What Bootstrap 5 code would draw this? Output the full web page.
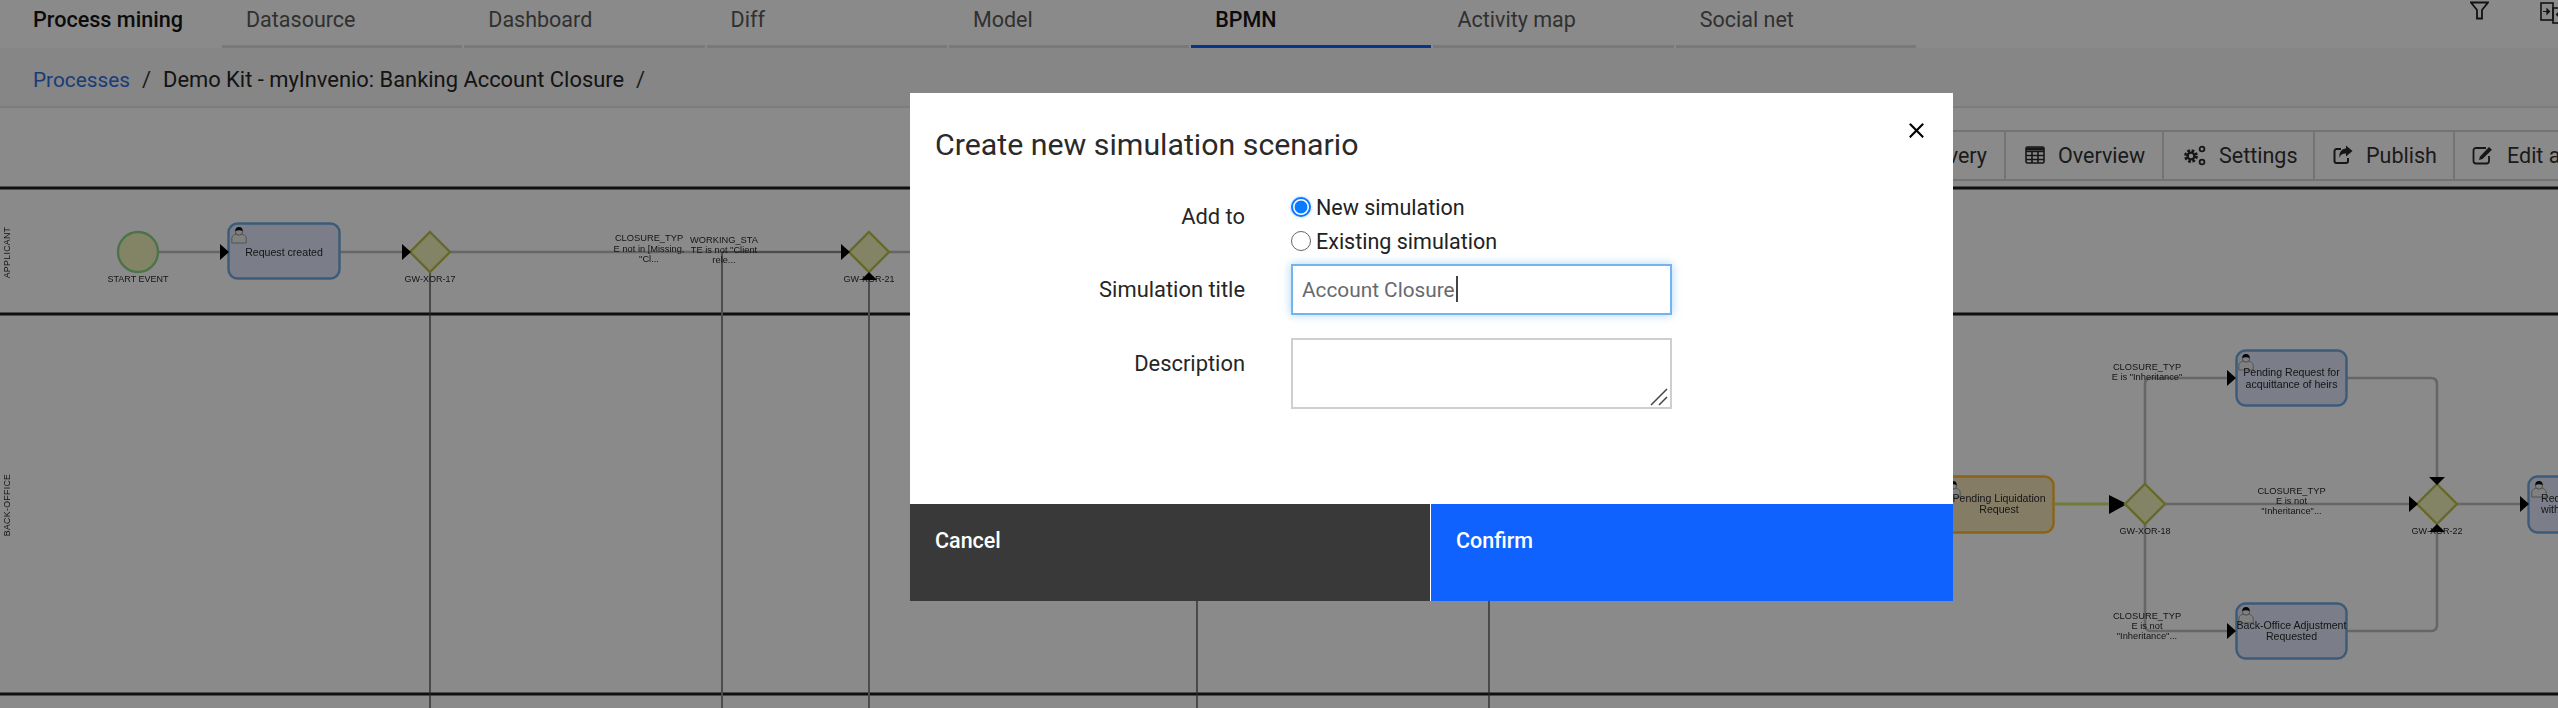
<!DOCTYPE html>
<html lang="en">
<head>
  <meta charset="UTF-8">
  <meta name="viewport" content="width=device-width, initial-scale=1.0">
  <title>Process mining - BPMN</title>
  <link href="https://cdn.jsdelivr.net/npm/bootstrap@5.3.2/dist/css/bootstrap.min.css" rel="stylesheet">
  <script src="https://cdn.jsdelivr.net/npm/bootstrap@5.3.2/dist/js/bootstrap.bundle.min.js" defer></script>
  <style>
    html, body { height: 100%; overflow: hidden; }
    body { font-family: Roboto, "Noto Sans", sans-serif; font-size: 21.5px; color: #161616; background: #fff; }

    /* top bar */
    .topbar { height: 48px; }
    .app-name { flex: 0 0 222px; padding: 7px 0 0 33px; line-height: 26px; font-weight: 500; font-size: 21.6px; white-space: nowrap; }
    .tab-item { flex: 0 0 240.3px; margin-right: 2px; height: 48px; padding: 7px 0 0 24px; line-height: 26px; color: #5a5a5a; border-bottom: 3px solid #e0e0e0; text-decoration: none; }
    .tab-item.active { color: #161616; font-weight: 500; border-bottom-color: #0f62fe; }
    .top-icons { margin-left: 552px; gap: 51px; padding-top: 1px; }

    /* breadcrumb band */
    .crumbs { height: 60px; background: #f8f8f8; border-bottom: 2px solid #e6e6e6; padding: 19px 0 0 33px; font-size: 21.9px; }
    .crumbs .breadcrumb { --bs-breadcrumb-margin-bottom: 0; --bs-breadcrumb-item-padding-x: 12px; --bs-breadcrumb-divider-color: #393939; --bs-breadcrumb-item-active-color: #262626; line-height: 26px; }
    .crumbs a { color: #2f6fe0; text-decoration: none; font-size: 20.8px; }

    /* toolbar over the diagram */
    .tools { margin: 22px 0 0 1840px; width: 718px; height: 51px; border-top: 2px solid #d6d6d6; border-bottom: 2px solid #d6d6d6; overflow: hidden; }
    .tool-btn { flex: 0 0 auto; height: 47px; display: flex; align-items: center; gap: 13px; padding: 2px 0 0 19px; color: #333; border-right: 2px solid #d6d6d6; white-space: nowrap; }
    .tool-btn svg { flex: 0 0 auto; margin-top: -3px; }
    .tb-disc { width: 166px; justify-content: flex-end; padding: 2px 17px 0 0; }
    .tb-over { width: 158px; }
    .tb-sett { width: 151px; }
    .tb-publ { width: 140px; padding-left: 18px; }
    .tb-edit { width: 120px; padding-left: 17px; border-right: 0; }

    /* diagram */
    .flow { display: block; margin-top: 5px; filter: blur(.7px); }
    .flow text { font-family: "Liberation Sans", Arial, sans-serif; fill: #2a2a2a; text-anchor: middle; }
    .t-note { font-size: 9.3px; }
    .t-gw { font-size: 9px; }
    .t-task { font-size: 10.6px; }
    .t-lane { font-size: 8.8px; letter-spacing: .3px; }
    .lane { stroke: #1c1c1c; stroke-width: 3; }
    .wire { stroke: #bcbcbc; stroke-width: 2.6; fill: none; }
    .wire-dark { stroke: #4a4a4a; stroke-width: 1.3; fill: none; }
    .wire-mid { stroke: #8c8c8c; stroke-width: 2; fill: none; }
    .gate { fill: #f3f4bd; stroke: #bcc24a; stroke-width: 2.4; }
    .task { fill: #e3e8fb; stroke: #6fa8e0; stroke-width: 2.4; }
    .task-warn { fill: #f6e6bd; stroke: #ffb72e; stroke-width: 2.4; }

    /* modal */
    .modal-backdrop { --bs-backdrop-opacity: .46; }
    .sim-dialog { margin: 93px 0 0 910px; width: 1043px; max-width: 1043px; }
    .sim-dialog .modal-content { height: 508px; border: 0; border-radius: 0; --bs-modal-border-radius: 0; }
    .sim-head { padding: 34px 28px 0 25px; border: 0; align-items: flex-start; border-radius: 0; }
    .sim-head .modal-title { font-size: 30.3px; font-weight: 400; line-height: 36px; color: #2a2a2a; }
    .modal-header .close-x { width: 17px; height: 17px; padding: 0; margin: -5px 0 0 auto; opacity: 1; background-size: 17px; }
    .sim-body { padding: 28px 0 0 0; }
    .sim-row { display: flex; gap: 46px; }
    .sim-label { flex: 0 0 335px; text-align: right; line-height: 30px; margin: 11px 0 0 0; font-size: 21.9px; color: #262626; }
    .sim-ctl { flex: 0 0 381px; position: relative; }
    .radio-line { display: flex; align-items: center; gap: 5px; height: 34px; min-height: 34px; padding: 0; margin: 0; color: #222; }
    .radio-line .form-check-input { float: none; width: 20px; height: 20px; margin: -3px 0 0 0; border: 1.5px solid #666; box-shadow: none; }
    .radio-line .form-check-input:checked { border: 2px solid #0a7aff; background: #fff radial-gradient(circle, #0a7aff 0 6px, transparent 6.8px); box-shadow: 0 0 3px rgba(10,122,255,.45); }
    .title-row { margin-top: 5px; }
    .title-input { height: 51px; padding: 0 9px; border: 2px solid #74b4ee; border-radius: 0; font-size: 20.8px; color: #666a70; box-shadow: 0 0 9px rgba(102,175,233,.55); }
    .fake-caret { position: absolute; left: 165px; top: 12px; width: 2px; height: 26px; background: #444; }
    .desc-row { margin-top: 23px; }
    .desc-input { height: 71px; min-height: 71px; border: 2px solid #cfcfcf; border-radius: 0; resize: none; }
    .desc-grip { position: absolute; right: 4px; bottom: 3px; display: block; }
    .sim-foot { padding: 0; border: 0; flex-wrap: nowrap; gap: 1px; border-radius: 0; background: #fff; }
    .sim-foot .btn { height: 97px; margin: 0; padding: 24px 25px 0; display: flex; align-items: flex-start; border: 0; border-radius: 0; font-size: 21.5px; font-weight: 500; line-height: 26px; }
    .sim-foot .btn-cancel { flex: 0 0 520px; background: #393939; color: #fff; }
    .sim-foot .btn-confirm { flex: 0 0 522px; background: #0f62fe; color: #fff; }
  </style>
</head>
<body>
  <header class="topbar d-flex">
    <div class="app-name">Process mining</div>
    <a class="tab-item" href="#">Datasource</a>
    <a class="tab-item" href="#">Dashboard</a>
    <a class="tab-item" href="#">Diff</a>
    <a class="tab-item" href="#">Model</a>
    <a class="tab-item active" href="#">BPMN</a>
    <a class="tab-item" href="#">Activity map</a>
    <a class="tab-item" href="#">Social net</a>
    <div class="top-icons d-flex">
      <svg width="19" height="19" viewBox="0 0 19 19" fill="none" stroke="#222" stroke-width="1.8"><path d="M1 1.5h17l-6 7.5v8.5H7V9z"/></svg>
      <svg width="26" height="24" viewBox="0 0 26 24" fill="none" stroke="#222" stroke-width="1.6"><rect x="1" y="2" width="12" height="17"/><rect x="13" y="7" width="12" height="15"/><path d="M3 10.5h5M9.5 10.5l-2.5-2.500v5zM23 13.500h-5M16.500 13.500l2.500-2.500v5z" fill="#222" stroke-width="1.2"/></svg>
    </div>
  </header>

  <div class="crumbs">
    <ol class="breadcrumb">
      <li class="breadcrumb-item"><a href="#">Processes</a></li>
      <li class="breadcrumb-item active">Demo Kit - myInvenio: Banking Account Closure</li>
      <li class="breadcrumb-item active"></li>
    </ol>
  </div>

  <div class="tools d-flex">
    <div class="tool-btn tb-disc">Discovery</div>
    <div class="tool-btn tb-over">
      <svg width="20" height="18" viewBox="0 0 20 18" fill="none" stroke="#2a2a2a" stroke-width="1.6"><rect x="1" y="1" width="18" height="16" rx="1.500"/><path d="M1 5.500h18M1 9.500h18M1 13.500h18M7 5v12M13 5v12"/><path d="M1 3h18" stroke-width="3"/></svg>
      Overview
    </div>
    <div class="tool-btn tb-sett">
      <svg width="23" height="21" viewBox="0 0 23 21" fill="none" stroke="#2a2a2a"><circle cx="8" cy="11" r="5.400" stroke-width="3" stroke-dasharray="2.600 1.640"/><circle cx="8" cy="11" r="3.400" stroke-width="2.400"/><circle cx="19" cy="4" r="2.400" stroke-width="1.800"/><circle cx="19" cy="17" r="2.400" stroke-width="1.800"/></svg>
      Settings
    </div>
    <div class="tool-btn tb-publ">
      <svg width="20" height="20" viewBox="0 0 20 20" fill="none" stroke="#2a2a2a" stroke-width="2"><path d="M8 4H3.500A2 2 0 0 0 1.500 6v10a2 2 0 0 0 2 2h9.500a2 2 0 0 0 2-2v-3"/><path d="M13 0.500l6.500 5.500-6.500 5.500V8.500C9 8.500 7 10 6.500 13 5.800 7.500 8.500 4 13 3.600z" fill="#2a2a2a" stroke="none"/></svg>
      Publish
    </div>
    <div class="tool-btn tb-edit">
      <svg width="22" height="20" viewBox="0 0 22 20" fill="none" stroke="#2a2a2a" stroke-width="1.800"><path d="M14 3H4a2.500 2.500 0 0 0-2.500 2.500v10.500A2.500 2.500 0 0 0 4 18.500h10.500a2.500 2.500 0 0 0 2.500-2.500V11"/><path d="M8 11.500L17 2l3 2.800-9.500 9.200-3.500 1z" fill="#2a2a2a" stroke="none"/></svg>
      Edit access
    </div>
  </div>

  <!-- the process diagram: free canvas, coordinates are page pixels -->
  <svg class="flow" width="2558" height="522" viewBox="0 186 2558 522" xmlns="http://www.w3.org/2000/svg">
    <defs>
      <g id="usr">
        <path d="M.8 17v-5c0-2.300 3-3.300 4.200-4h6c1.200.7 4.200 1.700 4.200 4v5z" fill="#ececec" stroke="#9a9a9a"/>
        <circle cx="8" cy="5.500" r="3.700" fill="#ececec" stroke="#8a8a8a"/>
        <path d="M4.300 5.200a3.700 4.300 0 0 1 7.400 0c-2.200-1.200-5.200-1.200-7.400 0z" fill="#0c0c0c"/>
      </g>
    </defs>

    <line class="lane" x1="0" y1="188" x2="2558" y2="188"/>
    <line class="lane" x1="0" y1="314" x2="2558" y2="314"/>
    <line class="lane" x1="0" y1="694" x2="2558" y2="694"/>
    <text class="t-lane" transform="translate(10 252.500) rotate(-90)">APPLICANT</text>
    <text class="t-lane" transform="translate(10 505) rotate(-90)">BACK-OFFICE</text>

    <!-- applicant lane wires -->
    <path class="wire" d="M158 252H222M340 252H404M450 252H843M889 252H910"/>
    <path class="wire-mid" d="M722 252V708M869 278V708"/>
    <path class="wire-mid" d="M722 252H843"/>
    <path class="wire-dark" d="M430 272V708M1197 314V708M1489 314V708"/>

    <circle cx="138" cy="252" r="20" fill="#f3f4bd" stroke="#8fd48d" stroke-width="2.400"/>
    <text class="t-gw" x="138" y="282">START EVENT</text>
    <rect class="task" x="228.500" y="223.500" width="111" height="55" rx="9"/>
    <use href="#usr" x="231" y="226"/>
    <text class="t-task" x="284" y="255.500">Request created</text>
    <polygon points="220,244 229,252 220,260" fill="#000"/>
    <polygon class="gate" points="430,232 450,252 430,272 410,252"/>
    <polygon points="402,244 411,252 402,260" fill="#000"/>
    <text class="t-gw" x="430" y="281.500">GW-XOR-17</text>
    <text class="t-note" x="649" y="241">CLOSURE_TYP</text>
    <text class="t-note" x="649" y="251.500">E not in [Missing,</text>
    <text class="t-note" x="649" y="261.500">"Cl...</text>
    <text class="t-note" x="724" y="243">WORKING_STA</text>
    <text class="t-note" x="724" y="253">TE is not "Client</text>
    <text class="t-note" x="724" y="263">rele...</text>
    <polygon class="gate" points="869,232 889,252 869,272 849,252"/>
    <polygon points="841,244 850,252 841,260" fill="#000"/>
    <text class="t-gw" x="869" y="281.500">GW-XOR-21</text>
    <polygon points="869,272 877,280 861,280" fill="#000"/>

    <!-- back office lane, right of the dialog -->
    <rect class="task-warn" x="1942.500" y="476.500" width="111" height="56" rx="9"/>
    <use href="#usr" x="1945" y="480"/>
    <text class="t-task" x="1999" y="502">Pending Liquidation</text>
    <text class="t-task" x="1999" y="513">Request</text>
    <line x1="2054" y1="504" x2="2112" y2="504" stroke="#d2e46a" stroke-width="3"/>
    <polygon points="2109,495 2127,504 2109,514" fill="#000"/>

    <path class="wire" d="M2145 484V384Q2145 378 2151 378H2228"/>
    <path class="wire" d="M2145 524V625Q2145 631 2151 631H2228"/>
    <path class="wire" d="M2165 504H2411"/>
    <path class="wire" d="M2347 378H2431Q2437 378 2437 384V478"/>
    <path class="wire" d="M2347 631H2431Q2437 631 2437 625V532"/>
    <path class="wire" d="M2457 504H2522"/>

    <polygon class="gate" points="2145,484 2165,504 2145,524 2125,504"/>
    <text class="t-gw" x="2145" y="533.500">GW-XOR-18</text>
    <polygon class="gate" points="2437,484 2457,504 2437,524 2417,504"/>
    <text class="t-gw" x="2437" y="533.500">GW-XOR-22</text>

    <rect class="task" x="2236.500" y="350.500" width="110" height="55" rx="9"/>
    <use href="#usr" x="2238" y="353"/>
    <text class="t-task" x="2291.500" y="375.500">Pending Request for</text>
    <text class="t-task" x="2291.500" y="387.500">acquittance of heirs</text>
    <rect class="task" x="2236.500" y="603.500" width="110" height="55" rx="9"/>
    <use href="#usr" x="2238" y="606"/>
    <text class="t-task" x="2291.500" y="628.500">Back-Office Adjustment</text>
    <text class="t-task" x="2291.500" y="639.500">Requested</text>
    <rect class="task" x="2528.500" y="476.500" width="112" height="56" rx="9"/>
    <use href="#usr" x="2531" y="480"/>
    <text class="t-task" x="2541" y="502" style="text-anchor:start">Request</text>
    <text class="t-task" x="2541" y="513" style="text-anchor:start">with</text>

    <polygon points="2227,370 2236,378 2227,386" fill="#000"/>
    <polygon points="2227,623 2236,631 2227,639" fill="#000"/>
    <polygon points="2409,496 2418,504 2409,512" fill="#000"/>
    <polygon points="2429,477 2445,477 2437,485" fill="#000"/>
    <polygon points="2429,532 2445,532 2437,524" fill="#000"/>
    <polygon points="2520,496 2529,504 2520,512" fill="#000"/>

    <text class="t-note" x="2147" y="370">CLOSURE_TYP</text>
    <text class="t-note" x="2147" y="380">E is "Inheritance"</text>
    <text class="t-note" x="2291.500" y="494">CLOSURE_TYP</text>
    <text class="t-note" x="2291.500" y="503.500">E is not</text>
    <text class="t-note" x="2291.500" y="514">"Inheritance"...</text>
    <text class="t-note" x="2147" y="619">CLOSURE_TYP</text>
    <text class="t-note" x="2147" y="628.500">E is not</text>
    <text class="t-note" x="2147" y="639">"Inheritance"...</text>
  </svg>

  <div class="modal-backdrop show"></div>
  <div class="modal d-block" tabindex="-1">
    <div class="modal-dialog sim-dialog">
      <div class="modal-content">
        <div class="modal-header sim-head">
          <h5 class="modal-title">Create new simulation scenario</h5>
          <button type="button" class="btn-close close-x" aria-label="Close"></button>
        </div>
        <div class="modal-body sim-body">
          <form>
            <div class="sim-row">
              <label class="sim-label">Add to</label>
              <div class="sim-ctl">
                <div class="form-check radio-line">
                  <input class="form-check-input" type="radio" name="addTo" id="addNew" checked>
                  <label class="form-check-label" for="addNew">New simulation</label>
                </div>
                <div class="form-check radio-line">
                  <input class="form-check-input" type="radio" name="addTo" id="addOld">
                  <label class="form-check-label" for="addOld">Existing simulation</label>
                </div>
              </div>
            </div>
            <div class="sim-row title-row">
              <label class="sim-label" for="simTitle">Simulation title</label>
              <div class="sim-ctl">
                <input type="text" class="form-control title-input" id="simTitle" value="Account Closure">
                <span class="fake-caret"></span>
              </div>
            </div>
            <div class="sim-row desc-row">
              <label class="sim-label" for="simDesc">Description</label>
              <div class="sim-ctl">
                <textarea class="form-control desc-input" id="simDesc"></textarea>
                <svg class="desc-grip" width="18" height="18" viewBox="0 0 18 18" stroke="#444" stroke-width="1.500"><path d="M1 17L17 1M9 17l8-8"/></svg>
              </div>
            </div>
          </form>
        </div>
        <div class="modal-footer sim-foot">
          <button type="button" class="btn btn-cancel">Cancel</button>
          <button type="button" class="btn btn-confirm">Confirm</button>
        </div>
      </div>
    </div>
  </div>
</body>
</html>
